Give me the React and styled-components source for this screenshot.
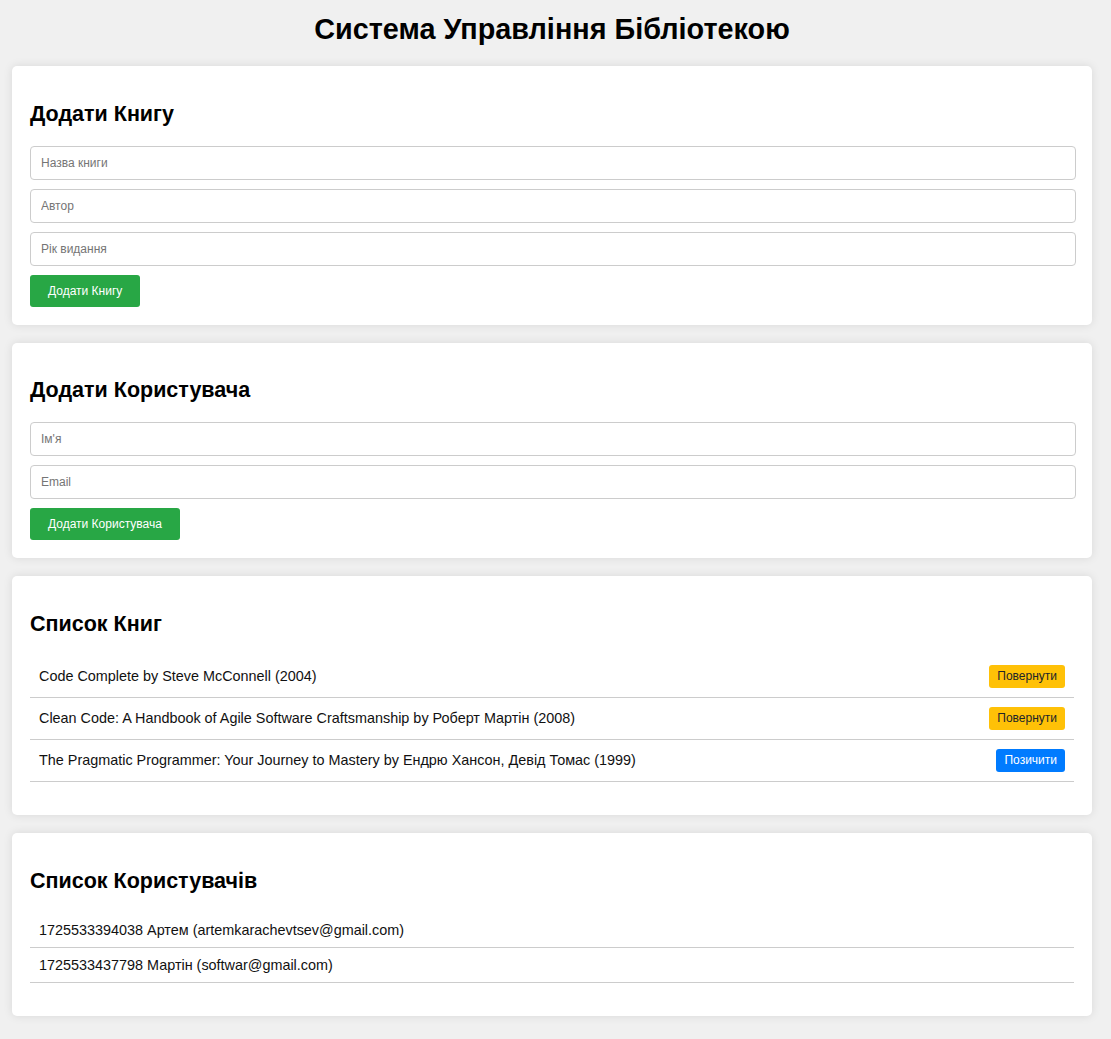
import styled, { createGlobalStyle } from "styled-components"

const GlobalStyle = createGlobalStyle`
  body {
    margin: 0;
    background: #f0f0f0;
    font-family: "Liberation Sans", Arial, sans-serif;
    color: #000;
  }
`

const books = [
  { id: 1, title: "Code Complete", author: "Steve McConnell", year: 2004, borrowed: true },
  { id: 2, title: "Clean Code: A Handbook of Agile Software Craftsmanship", author: "Роберт Мартін", year: 2008, borrowed: true },
  { id: 3, title: "The Pragmatic Programmer: Your Journey to Mastery", author: "Ендрю Хансон, Девід Томас", year: 1999, borrowed: false },
]

const users = [
  { id: "1725533394038", name: "Артем", email: "artemkarachevtsev@gmail.com" },
  { id: "1725533437798", name: "Мартін", email: "softwar@gmail.com" },
]

// Page
const Page = styled.div`
  padding: 0 19px 24px 12px;
`

const Title = styled.h1`
  margin: 13px 0 21px;
  font-size: 28.8px;
  line-height: 32px;
  font-weight: 700;
  text-align: center;
`

const Card = styled.section`
  background: #fff;
  border-radius: 5px;
  box-shadow: 0 0 10px rgba(0, 0, 0, 0.1);
  padding: 18px;
  margin-bottom: 18px;
`

const Heading = styled.h2`
  margin: 17.5px 0 19px;
  font-size: 21.5px;
  line-height: 25px;
  font-weight: 700;
`

const Input = styled.input`
  display: block;
  box-sizing: border-box;
  width: calc(100% + 2px);
  height: 34px;
  margin: 0 0 9px;
  padding: 0 10px;
  border: 1px solid #ccc;
  border-radius: 4px;
  font-family: "Liberation Sans", Arial, sans-serif;
  font-size: 12px;
  color: #333;
  &::placeholder {
    color: #757575;
  }
`

const Button = styled.button`
  height: ${(p) => (p.$small ? "23px" : "32px")};
  padding: ${(p) => (p.$small ? "0 8px" : "0 18px")};
  border: none;
  border-radius: 3px;
  background: ${(p) => p.$bg || "#28a745"};
  color: ${(p) => p.$fg || "#fff"};
  font-family: "Liberation Sans", Arial, sans-serif;
  font-size: 12px;
  cursor: pointer;
`

const List = styled.ul`
  list-style: none;
  margin: 0 0 15.5px;
  padding: 0;
`

const Row = styled.li`
  display: flex;
  align-items: center;
  justify-content: space-between;
  padding: 9px;
  border-bottom: 1px solid #ccc;
  font-size: 14.4px;
  line-height: 16px;
  color: #111;
`

const BookRow = ({ book }) => (
  <Row>
    <span>{book.title} by {book.author} ({book.year})</span>
    {book.borrowed ? (
      <Button $small $bg="#ffc107" $fg="#212529">Повернути</Button>
    ) : (
      <Button $small $bg="#007bff">Позичити</Button>
    )}
  </Row>
)

const App = () => {
  return (
    <Page>
      <GlobalStyle />
      <Title>Система Управління Бібліотекою</Title>

      <Card>
        <Heading>Додати Книгу</Heading>
        <Input placeholder="Назва книги" />
        <Input placeholder="Автор" />
        <Input placeholder="Рік видання" />
        <Button>Додати Книгу</Button>
      </Card>

      <Card>
        <Heading>Додати Користувача</Heading>
        <Input placeholder="Ім'я" />
        <Input placeholder="Email" />
        <Button>Додати Користувача</Button>
      </Card>

      <Card>
        <Heading>Список Книг</Heading>
        <List>
          {books.map((b) => <BookRow key={b.id} book={b} />)}
        </List>
      </Card>

      <Card>
        <Heading>Список Користувачів</Heading>
        <List>
          {users.map((u) => (
            <Row key={u.id}>{u.id} {u.name} ({u.email})</Row>
          ))}
        </List>
      </Card>
    </Page>
  )
}

export default App
